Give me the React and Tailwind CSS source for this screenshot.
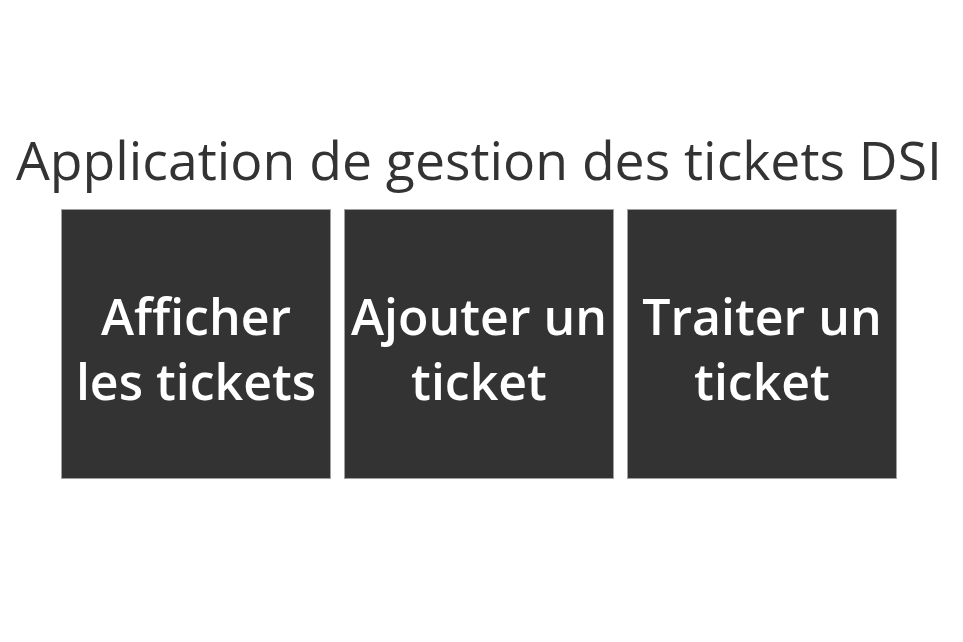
export default function App() {
  const items = ['Afficher les tickets', 'Ajouter un ticket', 'Traiter un ticket']
  return (
    <div className="min-h-screen bg-white font-['Open_Sans',sans-serif] text-[#333333]">
      <div className="flex flex-col items-center pt-[128px] pr-[5px]">
        <h1 className="text-[53.5px] leading-[64px] whitespace-nowrap">
          Application de gestion des tickets DSI
        </h1>
        <div className="mt-[17px] flex gap-[13px]">
          {items.map((label) => (
            <div
              key={label}
              className="flex h-[270px] w-[270px] items-center justify-center border border-[#a0a0a0] bg-[#333333] px-0 pt-[9px] text-center text-[50px] font-semibold leading-[65px] text-white"
            >
              {label}
            </div>
          ))}
        </div>
      </div>
    </div>
  )
}
